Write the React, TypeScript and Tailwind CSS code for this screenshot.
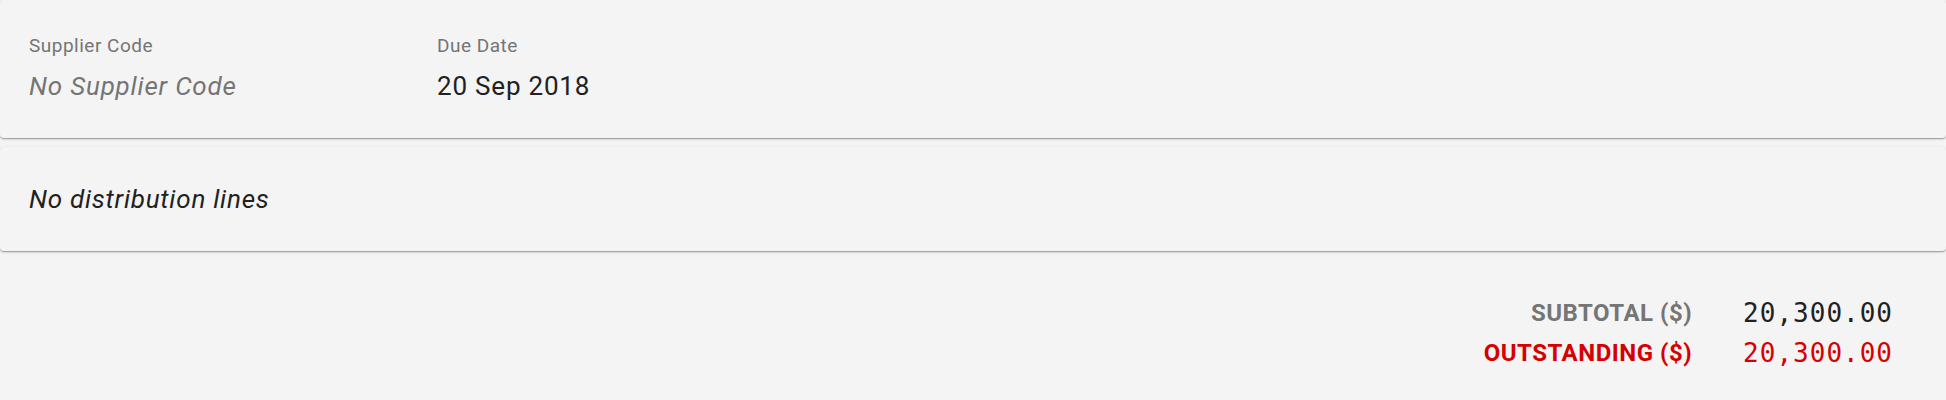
const cardShadow =
  "shadow-[0_1px_3px_rgba(0,0,0,0.2),0_1px_1px_rgba(0,0,0,0.14),0_2px_1px_-1px_rgba(0,0,0,0.12)]";

export default function App() {
  return (
    <div className="min-h-[400px] bg-[#f4f4f4] font-['Roboto',sans-serif]">
      <div className={`rounded-[4px] bg-[#f4f4f4] ${cardShadow} h-[138px] pl-[29px] pt-[35px] flex`}>
        <div className="w-[408px]">
          <div className="text-[19px] tracking-[0.5px] text-[#757575] leading-[22px]">Supplier Code</div>
          <div className="mt-[13px] text-[26px] tracking-[0.8px] italic text-[#757575] leading-[32px]">
            No Supplier Code
          </div>
        </div>
        <div>
          <div className="text-[19px] tracking-[0.5px] text-[#757575] leading-[22px]">Due Date</div>
          <div className="mt-[13px] text-[26px] tracking-[0.8px] text-[#212121] leading-[32px]">20 Sep 2018</div>
        </div>
      </div>
      <div className={`mt-[9px] rounded-[4px] bg-[#f4f4f4] ${cardShadow} h-[104px] pl-[29px] flex items-center`}>
        <div className="text-[26px] tracking-[0.75px] italic text-[#212121] leading-[32px]">No distribution lines</div>
      </div>
      <div className="pt-[42px] pr-[53px] flex justify-end">
        <div className="grid grid-cols-[auto_auto] gap-x-[51px] leading-[40px]">
          <div className="text-right text-[24px] font-bold tracking-[0.5px] text-[#757575]">SUBTOTAL ($)</div>
          <div className="font-['DejaVu_Sans_Mono',monospace] text-[26px] tracking-[1px] text-[#212121]">20,300.00</div>
          <div className="text-right text-[24px] font-bold tracking-[0.5px] text-[#d50000]">OUTSTANDING ($)</div>
          <div className="font-['DejaVu_Sans_Mono',monospace] text-[26px] tracking-[1px] text-[#d50000]">20,300.00</div>
        </div>
      </div>
    </div>
  );
}
